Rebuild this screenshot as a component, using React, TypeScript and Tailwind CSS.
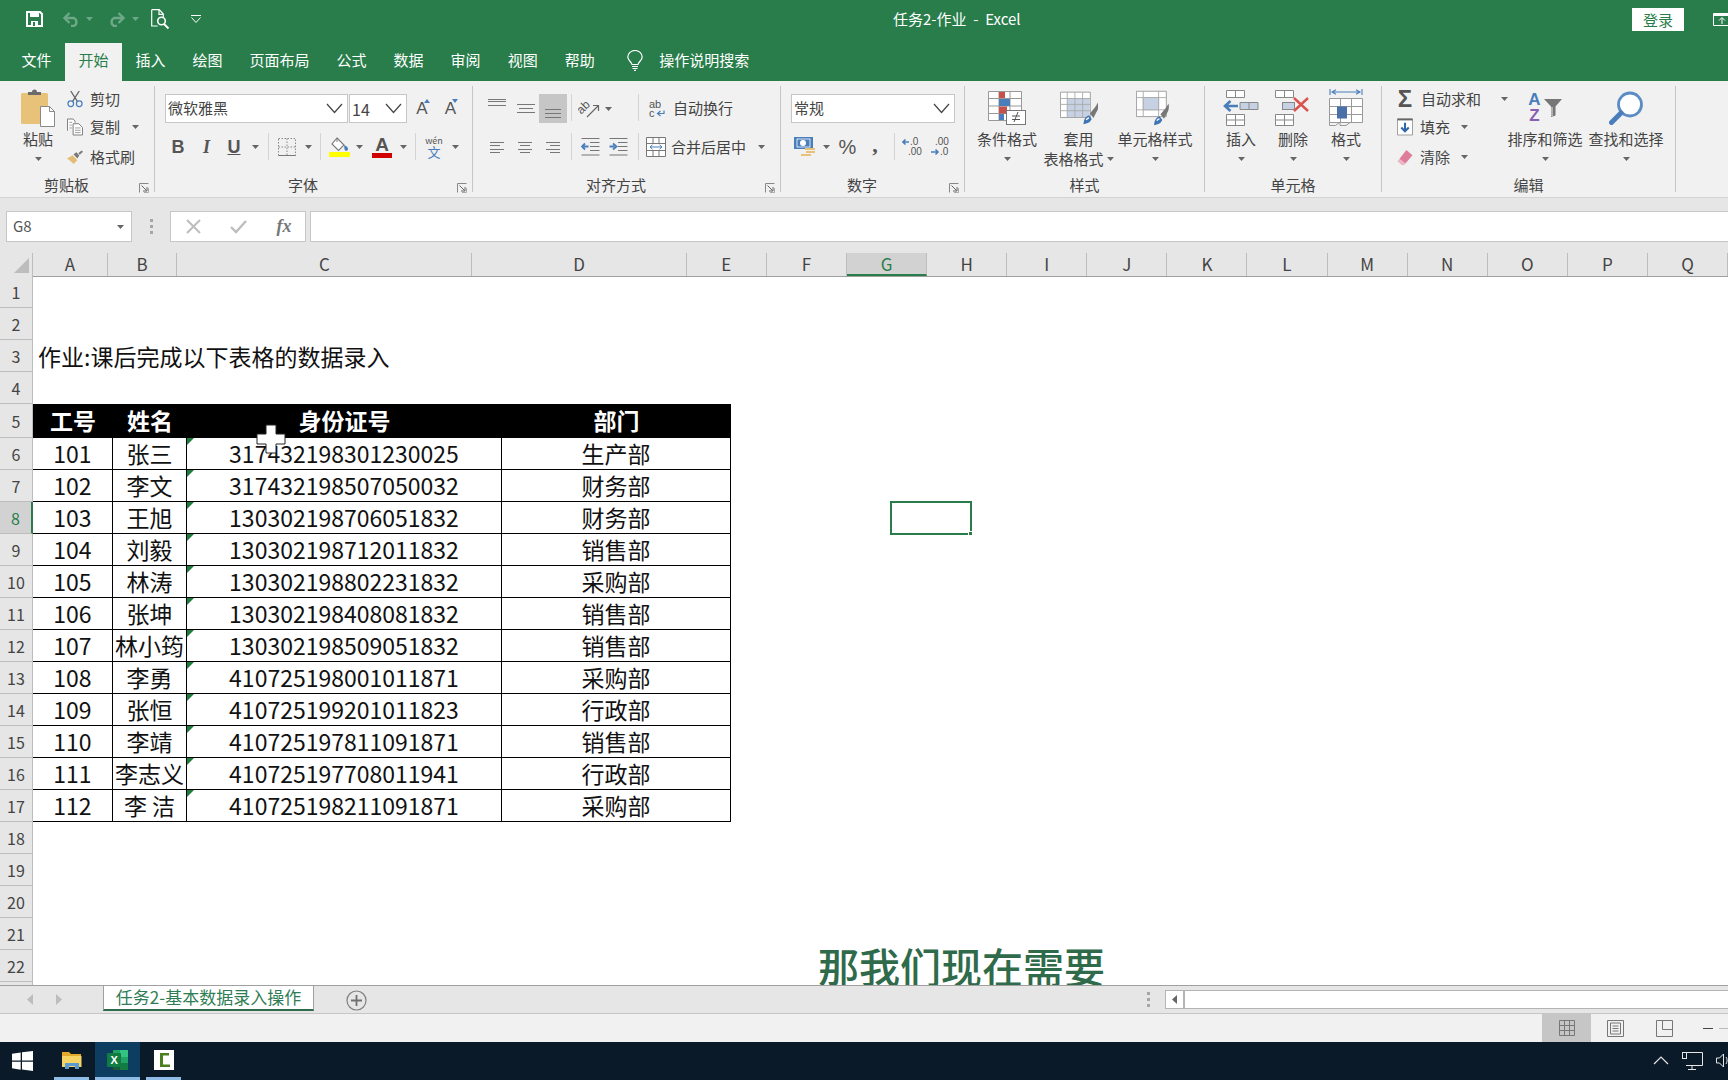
import React from 'react';

const green = '#287d4a';

const rows = [
  ['101', '张三', '317432198301230025', '生产部'],
  ['102', '李文', '317432198507050032', '财务部'],
  ['103', '王旭', '130302198706051832', '财务部'],
  ['104', '刘毅', '130302198712011832', '销售部'],
  ['105', '林涛', '130302198802231832', '采购部'],
  ['106', '张坤', '130302198408081832', '销售部'],
  ['107', '林小筠', '130302198509051832', '销售部'],
  ['108', '李勇', '410725198001011871', '采购部'],
  ['109', '张恒', '410725199201011823', '行政部'],
  ['110', '李靖', '410725197811091871', '销售部'],
  ['111', '李志义', '410725197708011941', '行政部'],
  ['112', '李 洁', '410725198211091871', '采购部'],
];

const columns = ['E', 'F', 'G', 'H', 'I', 'J', 'K', 'L', 'M', 'N', 'O', 'P', 'Q'];
const tabs = ['文件', '开始', '插入', '绘图', '页面布局', '公式', '数据', '审阅', '视图', '帮助'];

const Caret = ({ color = '#666' }: { color?: string }) => (
  <svg width="7" height="4" viewBox="0 0 7 4" className="shrink-0"><path d="M0 0h7L3.5 4z" fill={color} /></svg>
);

const Chevron = () => (
  <svg width="17" height="11" viewBox="0 0 17 11"><path d="M1 1l7.5 8.5L16 1" fill="none" stroke="#444" strokeWidth="1.2" /></svg>
);

const Launcher = () => (
  <svg width="10" height="10" viewBox="0 0 10 10"><path d="M.5 9.5V.5h9" fill="none" stroke="#888" /><path d="M2.5 2.5l5 5M8 4v4H4" fill="none" stroke="#666" /><path d="M9.5 5v4.5H5" fill="none" stroke="#aaa" /></svg>
);

const Sep = () => <div className="w-px h-[27px] bg-[#d4d4d4] mx-auto" />;

function Group({ label, launcher, className, children }: { label: string; launcher?: boolean; className: string; children: React.ReactNode }) {
  return (
    <div className={`h-[106px] shrink-0 flex flex-col border-r border-[#c6c6c6] ${className}`}>
      <div className="h-[92px]">{children}</div>
      <div className="h-[14px] flex items-center text-[15px] leading-[14px] text-[#444]">
        <span className="flex-1 text-center">{label}</span>
        {launcher && <div className="w-[21px] flex justify-center pt-[5px]"><Launcher /></div>}
      </div>
    </div>
  );
}

function BigButton({ icon, lines, className }: { icon: React.ReactNode; lines: string[]; className: string }) {
  return (
    <div className={`flex flex-col items-center shrink-0 text-[15px] text-[#444] ${className}`}>
      <div className="h-[44px] flex items-center justify-center">{icon}</div>
      <div className="h-[18px] leading-[18px] whitespace-nowrap">{lines[0]}</div>
      <div className="h-[22px] leading-[22px] flex items-center gap-[3px] whitespace-nowrap">
        {lines[1] && <span>{lines[1]}</span>}
        <Caret />
      </div>
    </div>
  );
}

function SmallRow({ icon, label, caret, className, gap = 'gap-[7px]', caretGap = 'ml-[3px]' }: { icon: React.ReactNode; label: string; caret?: boolean; className: string; gap?: string; caretGap?: string }) {
  return (
    <div className={`flex items-center text-[15px] text-[#444] ${gap} ${className}`}>
      <div className="w-[16px] flex justify-center shrink-0">{icon}</div>
      <span className="whitespace-nowrap">{label}</span>
      {caret && <span className={`flex ${caretGap}`}><Caret /></span>}
    </div>
  );
}

const AlignLines = ({ lines }: { lines: [number, number, number][] }) => (
  <svg width="22" height="22" viewBox="0 0 22 22">
    {lines.map(([x, y, w], i) => <rect key={i} x={x} y={y} width={w} height="1" fill="#777" />)}
  </svg>
);

const Cell = ({ children }: { children: React.ReactNode }) => <div className="flex items-center justify-center">{children}</div>;

/* quick access + title bar icons */
const SaveIcon = () => (
  <svg width="17" height="16" viewBox="0 0 17 16"><path d="M1 1h13l2 2v12H1z" fill="none" stroke="#fff" strokeWidth="2" /><rect x="4" y="1" width="9" height="5" fill="#fff" /><rect x="5" y="10" width="7" height="5" fill="#fff" /><rect x="7" y="11" width="2" height="4" fill={green} /></svg>
);
const UndoIcon = ({ flip }: { flip?: boolean }) => (
  <svg width="18" height="15" viewBox="0 0 18 15" className={flip ? '-scale-x-100' : ''}><path d="M2 6h9a4.5 4.5 0 0 1 0 8H8" fill="none" stroke="#6fa888" strokeWidth="2.4" /><path d="M6.5 1L1.5 6l5 5" fill="none" stroke="#6fa888" strokeWidth="2.4" /></svg>
);
const PreviewIcon = () => (
  <svg width="19" height="20" viewBox="0 0 19 20"><path d="M.7.7h7.5L12.3 5v3M.7.7V17h6M8 1v4.300h4.300" fill="none" stroke="#fff" strokeWidth="1.200" /><circle cx="10.500" cy="12" r="3.800" fill="none" stroke="#fff" strokeWidth="1.600" /><path d="M13 15l4.500 4.500" stroke="#fff" strokeWidth="2" /></svg>
);

const Bulb = () => (
  <svg width="16" height="21" viewBox="0 0 16 21"><path d="M5 14.500C4.500 11.500 .8 10.500.8 7a7.200 6.500 0 0 1 14.400 0c0 3.500-3.700 4.500-4.200 7.500z" fill="none" stroke="#fff" strokeWidth="1.200" /><path d="M5 16.500h6M5.500 18.500h5M7 20.300h2" stroke="#fff" strokeWidth="1.200" /></svg>
);

/* clipboard group */
const PasteIcon = () => (
  <svg width="36" height="38" viewBox="0 0 36 38">
    <rect x="1" y="4" width="27" height="31" rx="1.500" fill="#e9c27a" />
    <path d="M8 6V3h4a2.500 2.500 0 0 1 5 0h4v3z" fill="#6b6b6b" />
    <path d="M20.500 17.500h9l5 5v15h-14z" fill="#fff" stroke="#8a8a8a" />
    <path d="M29.500 17.500v5h5" fill="none" stroke="#8a8a8a" />
  </svg>
);
const ScissorsIcon = () => (
  <svg width="17" height="18" viewBox="0 0 17 18"><path d="M4 .5l7 11M13 .5l-7 11" stroke="#666" strokeWidth="1.400" /><circle cx="4" cy="14" r="3" fill="none" stroke="#4a7ebb" strokeWidth="1.300" /><circle cx="13" cy="14" r="3" fill="none" stroke="#4a7ebb" strokeWidth="1.300" /></svg>
);
const CopyIcon = () => (
  <svg width="17" height="18" viewBox="0 0 17 18"><path d="M.5 13V.5h6l2 2v2" fill="#fff" stroke="#777" /><path d="M6.500 5.500h6l4 4v8h-10z" fill="#fff" stroke="#777" /><path d="M2.500 4h3M2.500 7h2.500M2.500 10h2.500M8.500 10h6M8.500 12.500h6M8.500 15h6" stroke="#999" /></svg>
);
const PainterIcon = () => (
  <svg width="17" height="15" viewBox="0 0 17 15"><path d="M0 8.500l6-3.500 5 5.500-4 4C5 12 2.500 10 0 8.500z" fill="#e2bd74" /><path d="M7 4l3-2 3 3.500-2 3z" fill="#777" /><path d="M12 3l3.500-3 1.500 1.500-3.500 3z" fill="#777" /></svg>
);

/* font group */
const BordersIcon = () => (
  <svg width="18" height="18" viewBox="0 0 18 18"><path d="M.5.5h17v17H.5zM9 .5v17M.5 9h17" fill="none" stroke="#8a8a8a" strokeDasharray="1.500 1.500" /><path d="M.5 17.500h17" stroke="#777" /></svg>
);
const FillIcon = () => (
  <div className="flex flex-col items-center">
    <svg width="21" height="16" viewBox="0 0 21 16"><path d="M8 1l7 7-5.500 5.500-6.500-6.500z" fill="#fff" stroke="#777" strokeWidth="1.100" /><path d="M8 1v4" stroke="#777" /><path d="M15 8c2 1 4 1.500 4 4 0 1-.8 1.800-1.700 1.800S15.500 13 15.500 12z" fill="#4a7ebb" /></svg>
    <div className="w-[21px] h-[5px] bg-[#ffff00] -mt-[1px]" />
  </div>
);
const FontColorIcon = () => (
  <div className="flex flex-col items-center">
    <span className="text-[19px] leading-[17px] font-bold text-[#555] [font-family:'Liberation_Sans',sans-serif]">A</span>
    <div className="w-[20px] h-[5px] bg-[#d00000]" />
  </div>
);
const SizeA = ({ up }: { up?: boolean }) => (
  <div className="flex items-start">
    <span className="text-[17px] leading-[17px] text-[#555] [font-family:'Liberation_Sans',sans-serif]">A</span>
    <svg width="6" height="4" viewBox="0 0 6 4" className="-ml-[4px] -mt-[1px]"><path d={up ? 'M0 4h6L3 0z' : 'M0 0h6L3 4z'} fill="#4a7ebb" /></svg>
  </div>
);
const Wen = () => (
  <div className="flex flex-col items-center leading-none">
    <span className="text-[9px] leading-[9px] text-[#555]">wén</span>
    <span className="text-[13px] leading-[13px] text-[#4a7ebb]">文</span>
  </div>
);

/* alignment group */
const Orient = () => (
  <svg width="22" height="20" viewBox="0 0 22 20">
    <text x="0" y="12" fontSize="12" fill="#555" transform="rotate(-45 6 10)" fontFamily="Liberation Sans">ab</text>
    <path d="M9 18L20 7M15 6.500h5.500V12" fill="none" stroke="#666" strokeWidth="1.200" />
  </svg>
);
const WrapIcon = () => (
  <svg width="16" height="20" viewBox="0 0 16 20" fontFamily="Liberation Sans" fontSize="11" fill="#555">
    <text x="0" y="8.500">ab</text>
    <text x="0" y="18">c</text>
    <path d="M15 11.500v3h-6M11.500 12l-3 2.500 3 2.500" fill="none" stroke="#4a7ebb" strokeWidth="1.200" />
  </svg>
);
const MergeIcon = () => (
  <svg width="20" height="20" viewBox="0 0 20 20"><path d="M.5.5h19v19H.5zM.5 6.500h19M.5 13.500h19M7 .5v6M13 .5v6M7 13.500v6M13 13.500v6" fill="#fff" stroke="#777" /><rect x="1" y="7" width="18" height="6" fill="#fff" /><path d="M4 10h12M6.500 7.800L4 10l2.500 2.200M13.500 7.800L16 10l-2.500 2.200" fill="none" stroke="#4a7ebb" /></svg>
);
const IndentIcon = ({ flip }: { flip?: boolean }) => (
  <svg width="19" height="18" viewBox="0 0 19 18">
    <path d="M.5 .5h18M9 4.500h9.500M9 8.500h9.500M9 12.500h9.500M.5 17h18" stroke="#777" />
    <path d={flip ? 'M.5 8.500h5M4 5.500l3.500 3-3.500 3' : 'M7.500 8.500h-5M4 5.500l-3 3 3 3'} fill="none" stroke="#4a7ebb" strokeWidth="1.800" />
  </svg>
);

/* number group */
const AccountingIcon = () => (
  <svg width="22" height="20" viewBox="0 0 22 20"><rect x="0" y="0" width="19" height="12" fill="#4a7ebb" /><circle cx="9" cy="6" r="3" fill="#fff" /><rect x="3" y="2" width="13" height="8" fill="none" stroke="#fff" strokeWidth=".8" /><path d="M11 11h10v2H11zM12 14h9v2h-9zM7 17h10v2H7z" fill="#e9c27a" /></svg>
);
const DecimalIcon = ({ more }: { more?: boolean }) => (
  <svg width="22" height="20" viewBox="0 0 22 20" fontFamily="Liberation Sans" fontSize="10" fill="#555">
    {more ? (
      <>
        <text x="8" y="8">.0</text>
        <text x="6" y="18">.00</text>
        <path d="M7 5H1M3.500 2.500L1 5l2.500 2.500" fill="none" stroke="#4a7ebb" strokeWidth="1.600" />
      </>
    ) : (
      <>
        <text x="5" y="8">.00</text>
        <text x="10" y="18">.0</text>
        <path d="M1 15h7M5.500 12.500L8 15l-2.500 2.500" fill="none" stroke="#4a7ebb" strokeWidth="1.600" />
      </>
    )}
  </svg>
);

/* style group */
const CondIcon = () => (
  <svg width="38" height="34" viewBox="0 0 38 34">
    <path d="M.5.5h33v29H.5zM11 .5v29M22 .5v29M.5 7.500h33M.5 15h33M.5 22.500h33" fill="#fff" stroke="#999" />
    <rect x="11" y="1" width="6" height="6" fill="#c8504a" /><rect x="11" y="8" width="11" height="7" fill="#4a7ebb" /><rect x="11" y="15.500" width="8" height="7" fill="#c8504a" /><rect x="11" y="23" width="5" height="6" fill="#4a7ebb" />
    <rect x="18.500" y="19.500" width="19" height="14" fill="#fff" stroke="#777" />
    <path d="M24 25h8M24 28.500h8M26 31l4-10" stroke="#555" />
  </svg>
);
const Brush = () => (
  <g>
    <path d="M26 36c0-6 3-9 6-10l3 4c-1 3-3 5-9 6z" fill="#3f74b5" />
    <path d="M29 31c1-1.500 2-2 3-2" stroke="#fff" strokeWidth="1.500" fill="none" />
    <path d="M33 24l6-7 3-5c1 5 0 8-2 11l-3 6z" fill="#777" />
  </g>
);
const TableFormatIcon = () => (
  <svg width="38" height="36" viewBox="0 0 42 36">
    <path d="M.5.5h33v28H.5z" fill="#fff" stroke="#999" />
    <rect x="8" y="7" width="25" height="21" fill="#c6d2e3" />
    <path d="M8 .5v28M16.500 .5v28M25 .5v28M.5 7.500h33M.5 14h33M.5 21h33" fill="none" stroke="#aaa" />
    <Brush />
  </svg>
);
const CellStyleIcon = () => (
  <svg width="38" height="38" viewBox="0 0 42 38">
    <path d="M.5.5h33v28H.5z" fill="#fff" stroke="#999" />
    <path d="M8 .5v28M25 .5v28M.5 7.500h33M.5 21h33" fill="none" stroke="#aaa" />
    <rect x="8" y="7.500" width="17" height="13.500" fill="#c6d2e3" stroke="#aaa" />
    <g transform="translate(-6 2)"><Brush /></g>
  </svg>
);

/* cells group */
const InsertIcon = () => (
  <svg width="36" height="36" viewBox="0 0 36 36">
    <path d="M3.500 .5h18v7h-18zM12.500 .5v7M3.500 24.500h18v11h-18zM3.500 30h18M12.500 24.500v11" fill="#fff" stroke="#888" />
    <path d="M17 12.500h18v7H17zM26 12.500v7" fill="#c6d2e3" stroke="#888" />
    <path d="M15 16H2M7.500 11L2 16l5.500 5" fill="none" stroke="#4a7ebb" strokeWidth="2.600" />
  </svg>
);
const DeleteIcon = () => (
  <svg width="36" height="36" viewBox="0 0 36 36">
    <path d="M.5.5h18v7H.5zM9.500 .5v7M.5 24.500h18v11H.5zM.5 30h18M9.500 24.500v11" fill="#fff" stroke="#888" />
    <rect x="7.500" y="12.500" width="12" height="7" fill="#c6d2e3" stroke="#888" />
    <path d="M19 8l14 13M33 8L19 21" stroke="#d9534f" strokeWidth="2.400" />
  </svg>
);
const FormatIcon = () => (
  <svg width="34" height="38" viewBox="0 0 34 38">
    <path d="M1 0v6M33 0v6M3 3h28M7 .8L3 3l4 2.200M27 .8L31 3l-4 2.200" fill="none" stroke="#4a7ebb" strokeWidth="1.100" />
    <path d="M.5 9.500h33v24H.5zM11.500 9.500v24M22.500 9.500v24M.5 17.500h33M.5 25.500h33" fill="#fff" stroke="#999" />
    <rect x="8" y="17.500" width="10" height="12" fill="#4a70a8" />
    <path d="M.5 33.500v3h6l4-3M11 33.500v3h6l4-3" fill="none" stroke="#999" />
  </svg>
);

/* editing group */
const FillDownIcon = () => (
  <svg width="17" height="18" viewBox="0 0 17 18"><path d="M.5.5h16v17H.5z" fill="#fff" stroke="#999" /><path d="M.5 1h16" stroke="#666" strokeWidth="2" /><path d="M8.500 4.500v9M4.500 9.500l4 4 4-4" fill="none" stroke="#2e66aa" strokeWidth="2.200" /></svg>
);
const EraserIcon = () => (
  <svg width="17" height="17" viewBox="0 0 17 17"><path d="M10 .5l6.500 5.500L9 15 2.500 10z" fill="#df7e9b" /><path d="M2.500 10L.5 12.500 5 16.500h2.500L9 15z" fill="#ecb4c5" /></svg>
);
const SortIcon = () => (
  <div className="flex items-center gap-[3px] h-[32px]">
    <div className="flex flex-col items-center text-[17px] leading-[16px] font-bold [font-family:'Liberation_Sans',sans-serif]">
      <span className="text-[#4a7ebb]">A</span>
      <span className="text-[#8a5fb0]">Z</span>
    </div>
    <svg width="18" height="18" viewBox="0 0 18 18"><path d="M0 0h18l-6.500 7.500v9L7 18V7.500z" fill="#777" /><path d="M8 8v9" stroke="#eee" /></svg>
  </div>
);
const FindIcon = () => (
  <svg width="35" height="34" viewBox="0 0 35 34"><circle cx="21" cy="13.500" r="11.500" fill="#fff" stroke="#5c8cc4" strokeWidth="2.800" /><path d="M12 22L2.500 31.500" stroke="#4a7ebb" strokeWidth="5" strokeLinecap="round" /></svg>
);

/* status & task bar */
const WinLogo = () => (
  <svg width="21" height="20" viewBox="0 0 21 20"><path d="M0 2.800L8.700 1.500V9.500H0zM10 1.300L21 0v9.500H10zM0 10.700h8.700v8L0 17.300zM10 10.700h11V20l-11-1.500z" fill="#fff" /></svg>
);
const FolderIcon = () => (
  <svg width="20" height="18" viewBox="0 0 20 18"><path d="M0 1h7l2 2h10v3H0z" fill="#e2a92b" /><rect x="0" y="5" width="19.500" height="11" fill="#f6d365" /><path d="M3 12h14v6h-4v-3H7v3H3z" fill="#5a9bd4" /></svg>
);
const ExcelIcon = () => (
  <svg width="21" height="20" viewBox="0 0 21 20"><rect x="6" y="0" width="15" height="20" rx="1" fill="#21a366" /><rect x="13" y="0" width="8" height="7" fill="#33c481" /><rect x="13" y="13" width="8" height="7" fill="#107c41" /><rect x="6" y="13" width="7" height="7" fill="#185c37" /><rect x="0" y="3" width="14" height="14" rx="1" fill="#107c41" /><text x="3.500" y="14" fontSize="11" fontWeight="700" fill="#fff" fontFamily="Liberation Sans">X</text></svg>
);
const CamtasiaIcon = () => (
  <svg width="20" height="20" viewBox="0 0 20 20"><rect width="20" height="20" fill="#fff" /><path d="M6 3h9v2.500H9v9h7V17H6z" fill="#4b7f1f" /></svg>
);

export default function App() {
  return (
    <div className="relative w-[1728px] h-[1080px] overflow-hidden flex flex-col bg-white font-['Noto_Sans_CJK_SC','Noto_Sans',sans-serif]">
      {/* title bar */}
      <div className="h-[43px] shrink-0 bg-[#287d4a] flex items-center pb-[5px] pl-[26px] text-white">
        <SaveIcon />
        <div className="ml-[20px]"><UndoIcon /></div>
        <div className="ml-[5px]"><Caret color="#6fa888" /></div>
        <div className="ml-[14px]"><UndoIcon flip /></div>
        <div className="ml-[7px]"><Caret color="#6fa888" /></div>
        <div className="ml-[12px]"><PreviewIcon /></div>
        <svg width="10" height="8" viewBox="0 0 10 8" className="ml-[21px]"><path d="M0 .5h10M.5 2.500L5 7.500l4.500-5" fill="none" stroke="#fff" /></svg>
        <div className="ml-[692px] text-[15px] leading-[20px] whitespace-pre">任务2-作业  -  Excel</div>
        <button className="ml-auto w-[52px] h-[23px] bg-white text-[15px] leading-[23px] text-[#287d4a]">登录</button>
        <div className="ml-[29px] w-[15px] overflow-hidden">
          <svg width="18" height="13" viewBox="0 0 18 13"><path d="M.5.5h17v12H.5z" fill="none" stroke="#fff" /><path d="M.5 2h17" stroke="#fff" strokeWidth="2" /><path d="M9 11V5M6 7.500L9 4.500l3 3" fill="none" stroke="#fff" /></svg>
        </div>
      </div>

      {/* ribbon tabs */}
      <div className="h-[38px] shrink-0 bg-[#287d4a] flex pl-[8px] text-[15px] text-white">
        {tabs.map((t) => (
          <div key={t} className={`px-[13.5px] pb-[4px] flex items-center ${t === '开始' ? 'bg-[#f1f1f1] text-[#287d4a]' : ''}`}>{t}</div>
        ))}
        <div className="ml-[19px] pb-[4px] flex items-center"><Bulb /></div>
        <div className="ml-[16px] pb-[3px] flex items-center">操作说明搜索</div>
      </div>

      {/* ribbon */}
      <div className="h-[116px] shrink-0 bg-[#f1f1f1] flex pt-[5px]">
        <Group label="剪贴板" launcher className="w-[155px]">
          <div className="flex">
            <BigButton icon={<PasteIcon />} lines={['粘贴']} className="w-[60px] ml-[8px] -mr-px" />
            <div className="flex flex-col">
              <SmallRow icon={<ScissorsIcon />} label="剪切" className="h-[26px]" />
              <SmallRow icon={<CopyIcon />} label="复制" caret className="h-[30px]" caretGap="ml-[5px]" />
              <SmallRow icon={<PainterIcon />} label="格式刷" className="h-[30px]" />
            </div>
          </div>
        </Group>

        <Group label="字体" launcher className="w-[318px]">
          <div className="flex items-center pl-[10px] pt-[8px]">
            <div className="w-[183px] h-[29px] bg-white border border-[#c6c6c6] flex items-center justify-between pl-[2px] pr-[4px] text-[15px] text-[#444]">微软雅黑<Chevron /></div>
            <div className="w-[58px] h-[29px] ml-px bg-white border border-[#c6c6c6] flex items-center justify-between pl-[2px] pr-[4px] text-[16px] text-[#444]">14<Chevron /></div>
            <div className="w-[30px] ml-[1px] flex justify-center"><SizeA up /></div>
            <div className="w-[27px] flex justify-center"><SizeA /></div>
          </div>
          <div className="grid grid-cols-[28px_29px_26px_17px_8px_30px_12px_12px_26px_15px_30px_12px_13px_24px_18px] h-[28px] ml-[9px] mt-[10px] text-[#555]">
            <Cell><span className="text-[18px] font-bold leading-none [font-family:'Liberation_Sans',sans-serif]">B</span></Cell>
            <Cell><span className="text-[18px] font-bold italic leading-none [font-family:'Liberation_Serif',serif]">I</span></Cell>
            <Cell><span className="text-[18px] font-bold underline leading-none [font-family:'Liberation_Sans',sans-serif]">U</span></Cell>
            <Cell><Caret /></Cell>
            <Sep />
            <Cell><BordersIcon /></Cell>
            <Cell><Caret /></Cell>
            <Sep />
            <Cell><FillIcon /></Cell>
            <Cell><Caret /></Cell>
            <Cell><FontColorIcon /></Cell>
            <Cell><Caret /></Cell>
            <Sep />
            <Cell><Wen /></Cell>
            <Cell><Caret /></Cell>
          </div>
        </Group>

        <Group label="对齐方式" launcher className="w-[308px]">
          <div className="grid grid-cols-[28px_28px_28px_8px_28px_10px_22px_6px_32px_auto] h-[29px] ml-[10px] mt-[8px] text-[15px] text-[#444]">
            <Cell><AlignLines lines={[[2, 1, 18], [2, 3, 18], [2, 7, 18]]} /></Cell>
            <Cell><AlignLines lines={[[3, 6, 18], [5, 10, 14], [3, 14, 18]]} /></Cell>
            <div className="bg-[#c6c6c6] flex items-center justify-center"><AlignLines lines={[[3, 11, 16], [3, 15, 16], [3, 19, 16]]} /></div>
            <Sep />
            <Cell><Orient /></Cell>
            <Cell><Caret /></Cell>
            <div />
            <Sep />
            <Cell><WrapIcon /></Cell>
            <div className="flex items-center whitespace-nowrap">自动换行</div>
          </div>
          <div className="grid grid-cols-[28px_28px_28px_9px_28px_28px_3px_6px_30px_auto] h-[28px] ml-[10px] mt-[10px] text-[15px] text-[#444]">
            <Cell><AlignLines lines={[[4, 6, 14], [4, 9, 10], [4, 13, 14], [4, 16, 10]]} /></Cell>
            <Cell><AlignLines lines={[[4, 6, 14], [6, 9, 10], [4, 13, 14], [6, 16, 10]]} /></Cell>
            <Cell><AlignLines lines={[[4, 6, 14], [8, 9, 10], [4, 13, 14], [8, 16, 10]]} /></Cell>
            <Sep />
            <Cell><IndentIcon /></Cell>
            <Cell><IndentIcon flip /></Cell>
            <div />
            <Sep />
            <Cell><MergeIcon /></Cell>
            <div className="flex items-center whitespace-nowrap">合并后居中<span className="ml-[12px]"><Caret /></span></div>
          </div>
        </Group>

        <Group label="数字" launcher className="w-[184px]">
          <div className="w-[164px] h-[29px] ml-[10px] mt-[8px] bg-white border border-[#c6c6c6] flex items-center justify-between pl-[2px] pr-[4px] text-[15px] text-[#444]">常规<Chevron /></div>
          <div className="grid grid-cols-[28px_14px_29px_26px_12px_26px_30px] h-[28px] ml-[10px] mt-[10px] text-[#555]">
            <Cell><AccountingIcon /></Cell>
            <Cell><Caret /></Cell>
            <Cell><span className="text-[20px] leading-none [font-family:'Liberation_Sans',sans-serif]">%</span></Cell>
            <Cell><span className="text-[22px] font-bold leading-none pb-[5px] [font-family:'Liberation_Serif',serif]">,</span></Cell>
            <Sep />
            <Cell><DecimalIcon more /></Cell>
            <Cell><DecimalIcon /></Cell>
          </div>
        </Group>

        <Group label="样式" className="w-[240px]">
          <div className="flex pl-[5px]">
            <BigButton icon={<CondIcon />} lines={['条件格式']} className="w-[74px]" />
            <BigButton icon={<TableFormatIcon />} lines={['套用', '表格格式']} className="w-[69px]" />
            <BigButton icon={<CellStyleIcon />} lines={['单元格样式']} className="w-[84px]" />
          </div>
        </Group>

        <Group label="单元格" className="w-[177px]">
          <div className="flex pl-[10px]">
            <BigButton icon={<InsertIcon />} lines={['插入']} className="w-[52px]" />
            <BigButton icon={<DeleteIcon />} lines={['删除']} className="w-[52px]" />
            <BigButton icon={<FormatIcon />} lines={['格式']} className="w-[54px]" />
          </div>
        </Group>

        <Group label="编辑" className="w-[294px]">
          <div className="flex pl-[15px]">
            <div className="w-[109px] flex flex-col">
              <SmallRow icon={<span className="text-[24px] leading-none font-bold text-[#555] [font-family:'Liberation_Sans',sans-serif]">Σ</span>} label="自动求和" caret gap="gap-[8px]" caretGap="ml-[12px]" className="h-[26px]" />
              <SmallRow icon={<FillDownIcon />} label="填充" caret gap="gap-[7px]" caretGap="ml-[4px]" className="h-[30px]" />
              <SmallRow icon={<EraserIcon />} label="清除" caret gap="gap-[7px]" caretGap="ml-[4px]" className="h-[30px]" />
            </div>
            <BigButton icon={<SortIcon />} lines={['排序和筛选']} className="w-[78px]" />
            <BigButton icon={<FindIcon />} lines={['查找和选择']} className="w-[78px] ml-[3px]" />
          </div>
        </Group>
      </div>

      {/* formula bar */}
      <div className="h-[57px] shrink-0 bg-[#e6e6e6] border-t border-[#d4d4d4] flex pt-[13px] pl-[6px]">
        <div className="w-[126px] h-[31px] bg-white border border-[#c6c6c6] flex items-center justify-between pl-[6px] pr-[7px] text-[15px] text-[#555]">G8<Caret /></div>
        <div className="w-[38px] h-[31px] flex flex-col items-center justify-center gap-[3px]">
          <i className="w-[3px] h-[3px] bg-[#a6a6a6]" /><i className="w-[3px] h-[3px] bg-[#a6a6a6]" /><i className="w-[3px] h-[3px] bg-[#a6a6a6]" />
        </div>
        <div className="w-[136px] h-[31px] bg-white border border-[#c6c6c6] grid grid-cols-[44px_46px_46px] pl-[0px]">
          <Cell><svg width="15" height="15" viewBox="0 0 15 15"><path d="M1 1l13 13M14 1L1 14" stroke="#bdbdbd" strokeWidth="2" /></svg></Cell>
          <Cell><svg width="17" height="15" viewBox="0 0 17 15"><path d="M1 8l5 5L16 2" fill="none" stroke="#bdbdbd" strokeWidth="2.400" /></svg></Cell>
          <Cell><span className="italic font-bold text-[18px] text-[#777] [font-family:'Liberation_Serif',serif]">fx</span></Cell>
        </div>
        <div className="flex-1 h-[31px] ml-[4px] bg-white border-y border-l border-[#c6c6c6]" />
      </div>

      {/* column headers */}
      <div className="h-[23px] shrink-0 bg-[#e6e6e6] border-b border-[#9f9f9f] flex text-[17px] text-[#444] leading-[22px] -mt-[1px] box-content">
        <div className="w-[33px] shrink-0 flex items-end justify-end border-r border-[#bdbdbd] pr-[3px] pb-[3px]">
          <svg width="15" height="15" viewBox="0 0 15 15"><path d="M15 0v15H0z" fill="#bdbdbd" /></svg>
        </div>
        <div className="w-[80px] text-center border-r border-[#bdbdbd]">A</div>
        <div className="w-[74px] text-center border-r border-[#bdbdbd]">B</div>
        <div className="w-[315px] text-center border-r border-[#bdbdbd]">C</div>
        <div className="w-[229px] text-center border-r border-[#bdbdbd]">D</div>
        {columns.map((c) => (
          <div key={c} className={`w-[80.1px] shrink-0 text-center border-r border-[#bdbdbd] ${c === 'G' ? 'bg-[#d2d2d2] text-[#287d4a] border-b-2 border-b-[#287d4a]' : ''}`}>{c}</div>
        ))}
      </div>

      {/* grid */}
      <div className="relative flex-1 min-h-0 overflow-hidden flex flex-col -mt-[1px] text-[23px] text-[#111]">
        {[1, 2].map((n) => <Row key={n} n={n} />)}
        <Row n={3}><div className="pl-[5px] leading-[32px] whitespace-nowrap">作业:课后完成以下表格的数据录入</div></Row>
        <Row n={4} />
        <div className="h-[34px] shrink-0 flex">
          <RowHead n={5} />
          <div className="w-[698px] bg-black text-white font-bold grid grid-cols-[80px_74px_315px_229px] leading-[33px] text-center">
            <div>工号</div><div>姓名</div><div>身份证号</div><div>部门</div>
          </div>
        </div>
        {rows.map((r, i) => {
          const n = i + 6;
          return (
            <Row key={n} n={n}>
              <div className="grid grid-cols-[80px_74px_315px_229px] leading-[31px] text-center">
                <div className="border-r border-b border-black">{r[0]}</div>
                <div className="border-r border-b border-black whitespace-pre">{r[1]}</div>
                <div className="relative border-r border-b border-black">
                  <i className="absolute left-0 top-0 w-0 h-0 border-t-[7px] border-r-[7px] border-t-[#1e7d3a] border-r-transparent" />
                  {r[2]}
                </div>
                <div className="border-r border-b border-black">{r[3]}</div>
              </div>
              {n === 8 && (
                <div className="relative ml-[159px] -mt-[1px] w-[82px] h-[34px] border-2 border-[#287d4a]">
                  <i className="absolute -right-[3px] -bottom-[3px] w-[5px] h-[5px] bg-[#287d4a] border border-white" />
                </div>
              )}
            </Row>
          );
        })}
        {[18, 19, 20, 21, 22, 23].map((n) => <Row key={n} n={n} />)}

        <svg width="32" height="32" viewBox="0 0 32 32" className="absolute left-[255px] top-[147px]">
          <path d="M11 2h10v9h9v10h-9v9H11v-9H2V11h9z" fill="#fff" stroke="#222" strokeWidth="1" />
        </svg>
        <div className="absolute left-[818px] top-[669px] text-[41px] leading-[41px] font-medium text-[#2f6b4a] whitespace-nowrap">那我们现在需要</div>
      </div>

      {/* sheet tabs */}
      <div className="h-[29px] shrink-0 bg-[#e6e6e6] border-t border-b border-t-[#a0a0a0] border-b-[#c6c6c6] flex items-start">
        <div className="w-[103px] h-[27px] shrink-0 flex items-center pl-[27px] gap-[23px]">
          <svg width="6" height="11" viewBox="0 0 6 11"><path d="M6 0v11L0 5.500z" fill="#bdbdbd" /></svg>
          <svg width="6" height="11" viewBox="0 0 6 11"><path d="M0 0v11l6-5.500z" fill="#bdbdbd" /></svg>
        </div>
        <div className="w-[211px] h-[25px] bg-white border-x border-b-2 border-x-[#a0a0a0] border-b-[#2f6b4a] text-[17px] leading-[21px] text-center text-[#2f7d55] whitespace-nowrap">任务2-基本数据录入操作</div>
        <svg width="21" height="21" viewBox="0 0 21 21" className="ml-[32px] mt-[4px]"><circle cx="10.500" cy="10.500" r="9.500" fill="none" stroke="#808080" strokeWidth="1.200" /><path d="M10.500 5v11M5 10.500h11" stroke="#707070" strokeWidth="1.800" /></svg>
        <div className="ml-[780px] mt-[6px] flex flex-col gap-[3px]">
          <i className="w-[3px] h-[3px] bg-[#a6a6a6]" /><i className="w-[3px] h-[3px] bg-[#a6a6a6]" /><i className="w-[3px] h-[3px] bg-[#a6a6a6]" />
        </div>
        <div className="ml-[15px] mt-[4px] h-[19px] flex-1 bg-white border-y border-l border-[#b4b4b4] flex">
          <div className="w-[19px] flex items-center justify-center border-r-2 border-[#b4b4b4]">
            <svg width="5" height="9" viewBox="0 0 5 9"><path d="M5 0v9L0 4.500z" fill="#666" /></svg>
          </div>
        </div>
      </div>

      {/* status bar */}
      <div className="h-[28px] shrink-0 bg-[#f1f1f1] flex justify-end items-stretch">
        <div className="w-[49px] bg-[#c6c6c6] flex items-center justify-center">
          <svg width="16" height="16" viewBox="0 0 16 16"><path d="M.5.5h15v15H.5zM5.500 .5v15M10.500 .5v15M.5 5.500h15M.5 10.500h15" fill="none" stroke="#777" /></svg>
        </div>
        <div className="w-[49px] flex items-center justify-center">
          <svg width="17" height="17" viewBox="0 0 17 17"><path d="M.5.5h16v16H.5z" fill="none" stroke="#777" /><path d="M3.500 3h10v11h-10zM5.500 6h6M5.500 8.500h6M5.500 11h6" fill="none" stroke="#777" /></svg>
        </div>
        <div className="w-[49px] flex items-center justify-center">
          <svg width="17" height="17" viewBox="0 0 17 17"><path d="M.5.5h16v16H.5zM6.500 .5v9h10" fill="none" stroke="#777" /></svg>
        </div>
        <div className="w-[39px] flex items-center gap-[6px] pl-[14px] overflow-hidden">
          <i className="w-[10px] h-px bg-[#444] shrink-0" />
          <i className="w-[20px] h-px bg-[#bbb] shrink-0" />
        </div>
      </div>

      {/* taskbar */}
      <div className="h-[38px] shrink-0 bg-[#0b1a28] flex">
        <div className="w-[54px] flex items-center pl-[12px]"><WinLogo /></div>
        <div className="w-[35px] flex flex-col items-center">
          <div className="flex-1 flex items-center justify-center"><FolderIcon /></div>
          <div className="w-full h-[3px] bg-[#8fbce6]" />
        </div>
        <div className="w-[6px]" />
        <div className="w-[45px] flex flex-col items-center bg-[#0d3d61]">
          <div className="flex-1 flex items-center justify-center"><ExcelIcon /></div>
          <div className="w-full h-[3px] bg-[#8fbce6]" />
        </div>
        <div className="w-[6px]" />
        <div className="w-[35px] flex flex-col items-center">
          <div className="flex-1 flex items-center justify-center"><CamtasiaIcon /></div>
          <div className="w-full h-[3px] bg-[#8fbce6]" />
        </div>
        <div className="ml-auto flex items-center pb-[1px] gap-[13px] w-[75px]">
          <svg width="16" height="9" viewBox="0 0 16 9"><path d="M1 8l7-7 7 7" fill="none" stroke="#e6e6e6" strokeWidth="1.200" /></svg>
          <svg width="21" height="18" viewBox="0 0 21 18" className="shrink-0"><path d="M1 .5h19.500v13H4M10 13.500v4M6 17.500h8" fill="none" stroke="#e6e6e6" /><rect x=".5" y=".5" width="4" height="6" fill="#0b1a28" stroke="#e6e6e6" /></svg>
          <svg width="12" height="15" viewBox="0 0 12 15" className="shrink-0"><path d="M.5 5h3l4-4v13l-4-4h-3zM10 4c1.500 2 1.500 5 0 7" fill="none" stroke="#e6e6e6" /></svg>
        </div>
      </div>
    </div>
  );
}

function RowHead({ n }: { n: number }) {
  return (
    <div className={`w-[33px] shrink-0 flex items-center justify-center border-b text-[16px] ${n === 8 ? 'bg-[#d2d2d2] border-r-2 border-r-[#287d4a] border-b-[#bdbdbd] text-[#287d4a]' : 'bg-[#e6e6e6] border-r border-[#bdbdbd] text-[#444]'}`}>{n}</div>
  );
}

function Row({ n, children }: { n: number; children?: React.ReactNode }) {
  return (
    <div className="h-[32px] shrink-0 flex">
      <RowHead n={n} />
      {children}
    </div>
  );
}
